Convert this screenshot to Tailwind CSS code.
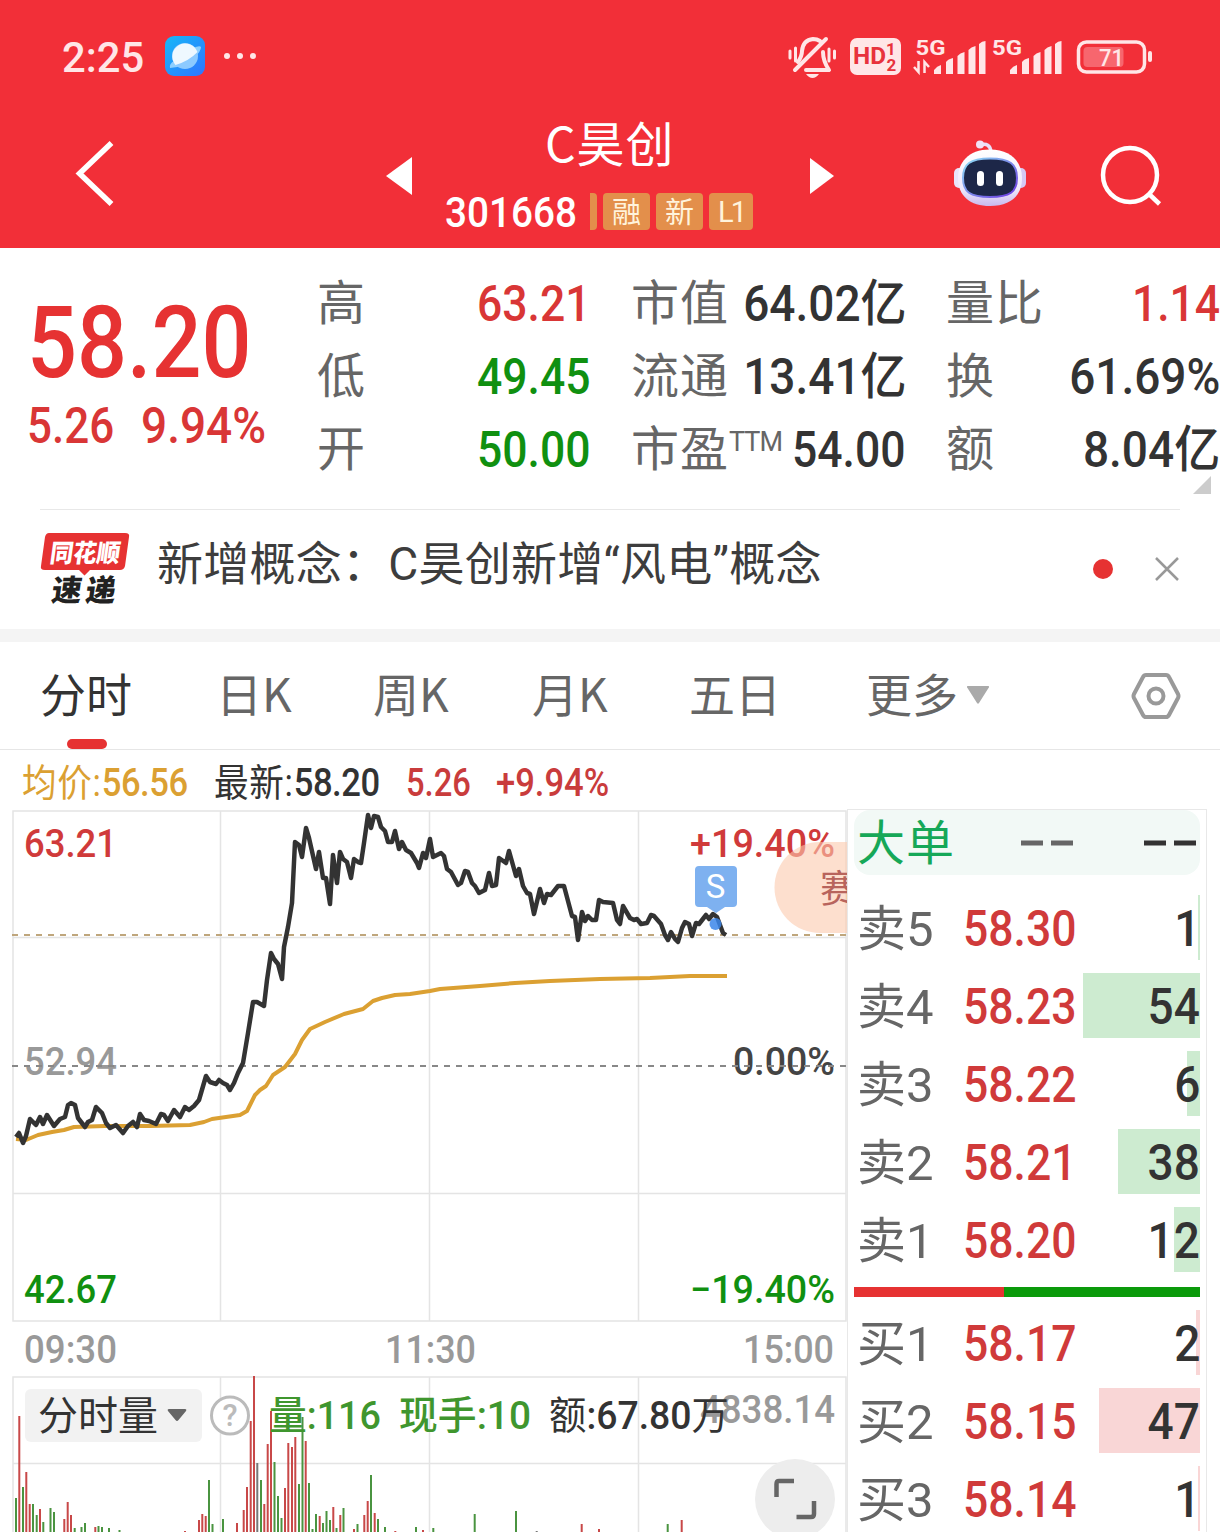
<!DOCTYPE html>
<html lang="zh-CN">
  <head>
    <meta charset="UTF-8" />
    <meta name="viewport" content="width=device-width, initial-scale=1.0" />
    <title>C昊创 301668</title>
    <script src="https://cdn.jsdelivr.net/npm/@tailwindcss/browser@4"></script>
  </head>
  <body class="bg-white">
    <div class="w-[1220px] h-[1532px] overflow-hidden flex flex-col bg-white text-[#333] leading-none whitespace-nowrap font-[Roboto,'Noto_Sans_CJK_SC',sans-serif]">

      <!-- Header -->
      <header class="h-[248px] shrink-0 bg-[#f22f38] text-white">
        <div class="h-[112px] flex items-center pl-[62px] text-[#ffe6e7]">
          <span class="w-[103px] text-[43px] font-medium mt-[3px] origin-left scale-x-[.97]">2:25</span>
          <svg class="w-10 h-10" viewBox="0 0 40 40">
            <defs>
              <linearGradient id="app" x1="0" y1="0" x2="1" y2="1">
                <stop offset="0" stop-color="#17b8f8" />
                <stop offset="1" stop-color="#2f74ff" />
              </linearGradient>
            </defs>
            <rect width="40" height="40" rx="9" fill="url(#app)" />
            <path d="M5 32Q4 28 9 25L28 12Q35 9 36 11Q36 15 30 21Q18 32 5 32Z" fill="#8fd0ff" />
            <circle cx="20" cy="20" r="13" fill="#8ccaff" />
            <path d="M10.500 29A13 13 0 1 1 32.500 16Q24 25 10.500 29Z" fill="#eef8ff" />
          </svg>
          <svg class="ml-[18px] w-[36px] h-[8px]" viewBox="0 0 36 8" fill="currentColor">
            <circle cx="4" cy="4" r="3" /><circle cx="17" cy="4" r="3" /><circle cx="30" cy="4" r="3" />
          </svg>
          <svg class="ml-[525px] w-[376px] h-[50px]" viewBox="784 31 376 50" fill="currentColor">
            <!-- muted bell -->
            <g fill="none" stroke="currentColor" stroke-width="4" stroke-linecap="round" stroke-linejoin="round">
              <path d="M798 62Q802 56 802 51Q803 40 813 39Q817 39 820 41" />
              <path d="M795 70L826 39" />
              <path d="M823 52Q823 61 829 70H806" />
              <path d="M790 51V58M795.500 48V61M829 49V61M834.500 51V58" stroke-width="3" />
            </g>
            <path d="M806 74H819Q816 78 812.500 78Q809 78 806 74Z" />
            <!-- HD badge -->
            <rect x="850" y="38" width="51" height="37" rx="7" />
            <g fill="#e8323c" class="font-bold">
              <text x="853" y="64" font-size="23" textLength="33" lengthAdjust="spacingAndGlyphs">HD</text>
              <text x="886" y="55" font-size="17">1</text>
              <text x="886.500" y="71" font-size="17">2</text>
            </g>
            <!-- signal -->
            <text x="915.500" y="55" font-size="21" class="font-bold" textLength="30" lengthAdjust="spacingAndGlyphs">5G</text>
            <text x="992" y="55" font-size="21" class="font-bold" textLength="30" lengthAdjust="spacingAndGlyphs">5G</text>
            <path d="M914 67L918.500 72V61M924.500 73V62L929 67" fill="none" stroke="currentColor" stroke-width="2.500" />
            <path d="M934 74V70Q937 66 941 65V74ZM946 74V62Q948 59 953 58V74ZM957.500 74V56Q960 53 964.500 52V74ZM968.500 74V50Q971 47 975.500 46V74ZM979 74V44Q982 41 985.500 41V74Z" />
            <path d="M1010 74V70Q1013 66 1017 65V74ZM1022 74V62Q1024 59 1029 58V74ZM1033.500 74V56Q1036 53 1040.500 52V74ZM1044.500 74V50Q1047 47 1051.500 46V74ZM1055 74V44Q1058 41 1061.500 41V74Z" />
            <!-- battery -->
            <rect x="1078.500" y="42" width="66" height="30" rx="8" fill="none" stroke="currentColor" stroke-width="3.500" />
            <rect x="1083.500" y="47" width="40" height="20" rx="4" fill="#f7666e" />
            <rect x="1148" y="51" width="4" height="11" rx="2" />
            <text x="1099" y="65.500" font-size="24" class="font-medium" textLength="25" lengthAdjust="spacingAndGlyphs">71</text>
          </svg>
        </div>

        <div class="h-[136px] flex">
          <svg class="ml-[72px] mt-[26px] w-[44px] h-[70px]" viewBox="72 138 44 70" fill="none" stroke="white" stroke-width="5.500">
            <path d="M111.500 143L79.500 173.500L111.500 204" />
          </svg>
          <svg class="ml-[270px] mt-[45px] w-[26px] h-[38px]" viewBox="0 0 26 38" fill="white"><path d="M0 19L26 0V38Z" /></svg>
          <div class="ml-[33px] w-[308px] flex flex-col">
            <h1 class="h-[60px] pl-[100px] text-[48px] tracking-[1px] font-['Noto_Sans_CJK_SC',sans-serif] mt-[5px]">C昊创</h1>
            <div class="flex h-[37px] items-center mt-[16px]">
              <span class="w-[145px]"><span class="inline-block origin-left scale-x-[.9] text-[43px] font-medium mt-[2px]">301668</span></span>
              <span class="w-[7px] h-[37px] rounded-r bg-[#e38f4b]"></span>
              <div class="flex gap-[6px] ml-[6px] text-[29px] text-[#fff3dc]">
                <span class="w-[47px] h-[37px] rounded bg-[#e38f4b] text-center leading-[40px]">融</span>
                <span class="w-[47px] h-[37px] rounded bg-[#e38f4b] text-center leading-[40px]">新</span>
                <span class="w-[44px] h-[37px] rounded bg-[#e38f4b] text-center leading-[38px] tracking-[-3px]">L1</span>
              </div>
            </div>
          </div>
          <svg class="ml-[57px] mt-[46px] w-[24px] h-[36px]" viewBox="0 0 24 36" fill="white"><path d="M0 0L24 18L0 36Z" /></svg>
          <svg class="ml-[118px] mt-[26px] w-[76px] h-[72px]" viewBox="952 138 76 72">
            <defs>
              <linearGradient id="shell" x1="0" y1="0" x2="0" y2="1">
                <stop offset="0" stop-color="#fff" />
                <stop offset=".7" stop-color="#efe9fb" />
                <stop offset="1" stop-color="#c9b9ee" />
              </linearGradient>
              <linearGradient id="rim" x1="0" y1="0" x2="1" y2="1">
                <stop offset="0" stop-color="#8fe0f5" />
                <stop offset="1" stop-color="#6a35e0" />
              </linearGradient>
            </defs>
            <path d="M980 145Q990 142 991 152" fill="none" stroke="#eadff8" stroke-width="3.500" />
            <circle cx="980" cy="144.500" r="4" fill="#f1e2f6" />
            <rect x="954" y="168" width="10" height="20" rx="5" fill="#e9e4fa" />
            <rect x="1016" y="168" width="10" height="20" rx="5" fill="#d5c9f4" />
            <path d="M990 149.500C1012 149.500 1022 163 1022 178C1022 196 1010 206 990 206C970 206 958 196 958 178C958 163 968 149.500 990 149.500Z" fill="url(#shell)" />
            <path d="M990 158.500C1010 158.500 1017 164 1017 178C1017 192 1010 197 990 197C970 197 963 192 963 178C963 164 970 158.500 990 158.500Z" fill="#1d2748" stroke="url(#rim)" stroke-width="2" />
            <rect x="977" y="171" width="7" height="15" rx="3.500" fill="white" />
            <rect x="996" y="171" width="7" height="15" rx="3.500" fill="white" />
          </svg>
          <svg class="ml-[70px] mt-[30px] w-[66px] h-[66px]" viewBox="1098 142 66 66" fill="none" stroke="white" stroke-width="4.500">
            <circle cx="1130" cy="175" r="27" />
            <path d="M1149 194L1159.500 204" />
          </svg>
        </div>
      </header>

      <!-- Quote -->
      <section class="h-[261px] shrink-0 flex relative">
        <div class="w-[317px] pl-[27px] text-[#e63232] font-medium">
          <div class="text-[100px] mt-[45px] origin-left scale-x-[.88]">58.20</div>
          <div class="flex text-[50px] mt-[8px] text-[#d93636]">
            <span class="w-[114px] origin-left scale-x-[.88]">5.26</span>
            <span class="origin-left scale-x-[.92]">9.94%</span>
          </div>
        </div>
        <div class="w-[274px] pt-[19px] flex flex-col text-[48px] text-[#666]">
          <div class="h-[73px] flex items-center justify-between"><span>高</span><b class="mt-px text-[50px] font-medium origin-right scale-x-[.89] text-[#d93636]">63.21</b></div>
          <div class="h-[73px] flex items-center justify-between"><span>低</span><b class="mt-px text-[50px] font-medium origin-right scale-x-[.89] text-[#109010]">49.45</b></div>
          <div class="h-[73px] flex items-center justify-between"><span>开</span><b class="mt-px text-[50px] font-medium origin-right scale-x-[.89] text-[#109010]">50.00</b></div>
        </div>
        <div class="ml-[40px] w-[275px] pt-[19px] flex flex-col text-[48px] text-[#666]">
          <div class="h-[73px] flex items-center justify-between"><span class="tracking-[1px]">市值</span><b class="mt-px text-[50px] font-medium origin-right scale-x-[.92] text-[#333]">64.02亿</b></div>
          <div class="h-[73px] flex items-center justify-between"><span class="tracking-[1px]">流通</span><b class="mt-px text-[50px] font-medium origin-right scale-x-[.92] text-[#333]">13.41亿</b></div>
          <div class="h-[73px] flex items-center justify-between"><span class="flex tracking-[1px]">市盈<small class="mt-[3px] text-[27px] tracking-[-1px]">TTM</small></span><b class="mt-px -ml-[12px] text-[50px] font-medium origin-right scale-x-[.89] text-[#333]">54.00</b></div>
        </div>
        <div class="ml-[40px] w-[274px] pt-[19px] flex flex-col text-[48px] text-[#666]">
          <div class="h-[73px] flex items-center justify-between"><span class="tracking-[1px]">量比</span><b class="mt-px text-[50px] font-medium origin-right scale-x-[.89] text-[#d93636]">1.14</b></div>
          <div class="h-[73px] flex items-center justify-between"><span>换</span><b class="mt-px text-[50px] font-medium origin-right scale-x-[.92] text-[#333]">61.69%</b></div>
          <div class="h-[73px] flex items-center justify-between"><span>额</span><b class="mt-px text-[50px] font-medium origin-right scale-x-[.92] text-[#333]">8.04亿</b></div>
        </div>
        <svg class="absolute right-[9px] bottom-[15px] w-[18px] h-[18px]" viewBox="0 0 18 18" fill="#ccc"><path d="M18 0V18H0Z" /></svg>
      </section>

      <!-- News strip -->
      <section class="h-[120px] shrink-0 mx-[40px] border-t border-[#e8e8e8] flex">
        <svg class="mt-[20px] w-[92px] h-[78px]" viewBox="40 530 92 78">
          <path d="M49 533H125Q130 533 129 537L125 566Q124 570 120 570H90L84.500 575.500L79 570H45Q40 570 41 566L45 537Q46 533 49 533Z" fill="#e63232" />
          <g class="font-black" transform="skewX(-8)">
            <text x="128" y="562" font-size="25" fill="white" textLength="70" lengthAdjust="spacingAndGlyphs">同花顺</text>
            <text x="135" y="601" font-size="30" fill="#222" textLength="64">速递</text>
          </g>
        </svg>
        <span class="ml-[25px] w-[936px] text-[46px] tracking-[.25px] mt-[31px] text-[#3d3d3d]">新增概念：C昊创新增“风电”概念</span>
        <span class="mt-[49px] w-5 h-5 rounded-full bg-[#e63232]"></span>
        <svg class="ml-[42px] mt-[47px] w-6 h-6" viewBox="0 0 24 24" stroke="#999" stroke-width="2.500"><path d="M1 1L23 23M23 1L1 23" /></svg>
      </section>
      <div class="h-[13px] shrink-0 bg-[#f4f4f4]"></div>

      <!-- Tabs -->
      <nav class="h-[108px] shrink-0 border-b border-[#e6e6e6] pl-[40px] flex text-[46px] text-[#666] font-['Noto_Sans_CJK_SC',sans-serif]">
        <div class="w-[176px] flex flex-col">
          <span class="mt-[27px] h-[70px] text-[#333]">分时</span>
          <span class="ml-[27px] w-[40px] h-[10px] rounded-full bg-[#e63232]"></span>
        </div>
        <span class="w-[157px] mt-[27px]">日K</span>
        <span class="w-[159px] mt-[27px]">周K</span>
        <span class="w-[157px] mt-[27px]">月K</span>
        <span class="w-[177px] mt-[27px]">五日</span>
        <span class="w-[101px] mt-[27px]">更多</span>
        <svg class="mt-[44px] w-[22px] h-[18px]" viewBox="0 0 22 18" fill="#aaa"><path d="M1 0H21Q23 0 21.500 2L12 17Q11 18.500 10 17L.5 2Q-1 0 1 0Z" /></svg>
        <svg class="ml-[142px] mt-[30px] w-[50px] h-[48px]" viewBox="0 0 50 48" fill="none" stroke="#999" stroke-width="4" stroke-linejoin="round">
          <path d="M15 3H35Q37 3 38 5L47 22Q48 24 47 26L38 43Q37 45 35 45H15Q13 45 12 43L3 26Q2 24 3 22L12 5Q13 3 15 3Z" />
          <circle cx="25" cy="24" r="7.500" />
        </svg>
      </nav>

      <div class="flex grow">
        <!-- Intraday chart -->
        <section class="w-[847px] shrink-0">
          <div class="h-[60px] flex pl-[22px] pt-[14px] text-[38px] font-medium">
            <span class="w-[192px] origin-left scale-x-[.91] text-[#dba032]"><span class="font-normal tracking-[.8px]">均价:</span><span class="tracking-[-.5px]">56.56</span></span>
            <span class="w-[192px] origin-left scale-x-[.91]"><span class="font-normal tracking-[.8px]">最新:</span><span class="tracking-[-.5px]">58.20</span></span>
            <span class="w-[90px] origin-left scale-x-[.86] text-[#c93c3c]">5.26</span>
            <span class="origin-left scale-x-[.91] text-[#c93c3c]">+9.94%</span>
          </div>
          <svg class="block w-[847px] h-[722px]" viewBox="0 810 847 722" font-size="39" font-weight="500">
            <!-- grid -->
            <g fill="none" stroke="#e4e4e4" stroke-width="1.500">
              <path d="M13 811H846V1321H13ZM220.500 811V1321M429.500 811V1321M638.500 811V1321M13 937.500H846M13 1193.500H846" />
              <path d="M13 1532V1377H846V1532M220.500 1377V1532M429.500 1377V1532M638.500 1377V1532M13 1463.500H846" />
            </g>
            <path d="M12 935H846" stroke="#bfa67c" stroke-width="2" stroke-dasharray="6 6" />

            <!-- axis labels -->
            <text x="24" y="857" fill="#d03a3a" textLength="93" lengthAdjust="spacingAndGlyphs">63.21</text>
            <text x="24" y="1075" fill="#999" textLength="93" lengthAdjust="spacingAndGlyphs">52.94</text>
            <text x="24" y="1303" fill="#109010" textLength="93" lengthAdjust="spacingAndGlyphs">42.67</text>
            <text x="690" y="857" fill="#d03a3a" textLength="145" lengthAdjust="spacingAndGlyphs">+19.40%</text>
            <text x="733" y="1075" fill="#444" textLength="102" lengthAdjust="spacingAndGlyphs">0.00%</text>
            <text x="690" y="1303" fill="#109010" textLength="145" lengthAdjust="spacingAndGlyphs">−19.40%</text>
            <path d="M12 1066H846" stroke="#888" stroke-width="2" stroke-dasharray="6 6" />
            <g fill="#999">
              <text x="24" y="1363" textLength="93" lengthAdjust="spacingAndGlyphs">09:30</text>
              <text x="385" y="1363" textLength="91" lengthAdjust="spacingAndGlyphs">11:30</text>
              <text x="743" y="1363" textLength="91" lengthAdjust="spacingAndGlyphs">15:00</text>
              <text x="700" y="1423" textLength="135" lengthAdjust="spacingAndGlyphs">4838.14</text>
            </g>

            <!-- average and price lines -->
            <g fill="none" stroke-linejoin="round">
              <path stroke="#dba032" stroke-width="4" d="M16 1139L26 1140 38 1135 52 1132 64 1130 74 1127 105 1126 150 1126 190 1125 204 1122 212 1119 240 1115 247 1111 251 1103 255 1095 260 1090 266 1086 273 1075 285 1067 295 1054 302 1040 310 1029 325 1022 344 1014 363 1009 368 1005 373 1001 382 998 395 995 410 994 430 991 440 989 480 986 515 983 550 981 600 979 650 978 690 976 727 976" />
              <path stroke="#333" stroke-width="4.500" d="M16 1137L19 1133 23 1143 26 1136 30 1119 36 1125 40 1117 43 1124 47 1115 54 1126 60 1119 65 1117 68 1105 71 1103 75 1105 78 1118 85 1127 88 1122 92 1120 96 1107 102 1113 106 1123 110 1128 116 1125 123 1133 128 1126 133 1122 137 1127 140 1114 144 1120 149 1121 156 1124 161 1114 164 1115 168 1121 174 1110 180 1117 185 1107 189 1110 194 1106 199 1100 206 1076 210 1082 216 1084 219 1080 223 1083 227 1085 230 1090 234 1083 238 1073 243 1063 248 1033 253 1002 257 1002 264 1006 267 980 271 953 274 959 278 964 282 979 284 947 288 927 292 903 295 842 299 845 302 857 306 828 309 838 316 869 319 852 323 878 326 878 330 904 333 855 337 883 340 852 343 859 347 862 351 878 354 859 358 862 361 863 364 843 368 815 371 828 374 816 378 817 381 827 385 831 388 842 392 842 395 831 399 849 402 842 406 850 411 853 417 863 419 868 423 853 426 858 430 839 433 857 441 853 444 856 447 869 451 872 458 885 461 883 465 871 468 872 472 883 475 886 479 893 485 890 489 873 492 886 496 885 499 858 506 863 509 851 516 876 519 869 523 886 527 893 530 894 534 914 540 889 544 903 547 894 551 895 558 886 564 886 572 916 575 917 578 940 582 912 585 921 588 916 592 920 596 920 599 900 603 902 613 903 617 920 620 924 623 906 630 918 634 920 637 919 641 924 647 923 651 915 654 916 661 924 665 935 668 940 671 932 675 939 678 942 682 928 685 922 689 924 692 936 696 923 699 924 706 915 709 919 713 914 717 917 720 925 723 933 726 935" />
            </g>

            <!-- sell marker -->
            <path d="M699 866H733Q737 866 737 870V903Q737 907 733 907H725L716 913L707 907H699Q695 907 695 903V870Q695 866 699 866Z" fill="#7eb1f0" />
            <text x="715.500" y="898" font-size="33" font-weight="400" fill="white" text-anchor="middle">S</text>
            <circle cx="715.500" cy="924" r="6" fill="#3b86ea" fill-opacity=".85" />

            <!-- promo bubble -->
            <path d="M847 842H820A45.500 45.500 0 0 0 820 933H847Z" fill="#fcc9ad" fill-opacity=".6" />
            <text x="820" y="902" font-size="38" font-weight="400" fill="#b8645c">赛</text>

            <!-- volume -->
            <g fill="none" stroke-width="2">
              <path stroke="#4a9440" d="M16 1498V1532M23 1487V1532M33 1504V1532M36.700 1515V1532M43.300 1522V1532M50.500 1508V1532M54 1512V1532M74.700 1528V1532M81.500 1527V1532M85 1523V1532M98.500 1526V1532M102 1527V1532M109 1528V1532M119.500 1530V1532M209 1480V1532M212.500 1524V1532M223 1519V1532M261 1480V1532M274.500 1462V1532M278 1496V1532M281.500 1518V1532M299 1484V1532M302.500 1417V1532M309 1483V1532M312.500 1529V1532M316 1514V1532M323 1523V1532M326.500 1511V1532M330 1520V1532M336.500 1528V1532M343.500 1508V1532M357.500 1524V1532M371 1475V1532M378 1519V1532M385 1527V1532M416 1527V1532M433.300 1528V1532M474.700 1514V1532M516 1511V1532M667.700 1524V1532" />
              <path stroke="#c84848" d="M19.300 1416V1532M26.300 1472V1532M29.700 1504V1532M40 1509V1532M64.300 1519V1532M67.700 1502V1532M71 1515V1532M95.300 1527V1532M185 1531V1532M199 1520V1532M202.300 1514V1532M205.700 1516V1532M237 1523V1532M243.700 1510V1532M247 1487V1532M250.700 1421V1532M254 1376V1532M264.300 1504V1532M267.700 1444V1532M271 1411V1532M285 1488V1532M288.300 1443V1532M292 1447V1532M295.300 1437V1532M305.700 1441V1532M319.700 1516V1532M333.300 1507V1532M340.300 1515V1532M354 1529V1532M364.300 1515V1532M367.700 1501V1532M374.700 1513V1532M395.300 1531V1532M423 1530V1532M581.700 1524V1532M599 1529V1532M681.700 1520V1532" />
              <path stroke="#777" d="M257.300 1463V1532M536.700 1531V1532" />
            </g>
            <rect x="25" y="1389" width="177" height="53" rx="6" fill="#f2f2f2" />
            <text x="38" y="1430" font-size="40" font-weight="400" fill="#333">分时量</text>
            <path d="M169 1409H185Q187 1409 186 1411L178.500 1420Q177 1422 175.500 1420L168 1411Q167 1409 169 1409Z" fill="#666" />
            <circle cx="230" cy="1415.500" r="18.500" fill="white" stroke="#bbb" stroke-width="3" />
            <text x="230" y="1426" font-size="31" font-weight="500" fill="#bbb" text-anchor="middle">?</text>
            <g>
              <text x="269" y="1429" fill="#3f962e" textLength="112" lengthAdjust="spacingAndGlyphs">量:116</text>
              <text x="399" y="1429" fill="#3f962e" textLength="132" lengthAdjust="spacingAndGlyphs">现手:10</text>
              <text x="549" y="1429" fill="#333" textLength="180" lengthAdjust="spacingAndGlyphs"><tspan font-weight="400">额</tspan>:67.80<tspan font-weight="400">万</tspan></text>
            </g>
            <circle cx="795" cy="1499" r="40" fill="#ededed" />
            <path d="M776.500 1497V1484Q776.500 1481 779 1481H794M814 1501V1514Q814 1517 811 1517H796.500" fill="none" stroke="#666" stroke-width="4.500" />
          </svg>
        </section>

        <!-- Order book -->
        <section class="relative mt-[59px] w-[360px] shrink-0 border border-[#e8e8e8] px-[6px] text-[48px] text-[#666]">
          <div class="h-[65px] rounded-2xl bg-[#f2f9f6] flex items-center justify-between pl-[3px] pr-[3px]">
            <span class="tracking-[1px] text-[#16a858] mt-[3px]">大单</span>
            <svg class="w-[177px] h-[6px]" viewBox="0 0 177 6" stroke-width="5">
              <path d="M1 3H23M31 3H53" stroke="#666" />
              <path d="M124 3H146M154 3H176" stroke="#333" />
            </svg>
          </div>
          <div class="mt-[15px] text-[50px] font-medium">
            <div class="relative h-[78px] flex items-center pl-[3px]">
              <span class="w-[106px] font-normal text-[49px]">卖5</span><span class="grow origin-left scale-x-[.89] text-[#d03a3a]">58.30</span>
              <i class="absolute right-0 top-[5px] w-[2px] h-[65px] bg-[#cdebd0]"></i><span class="relative origin-right scale-x-[.92] text-[#333]">1</span>
            </div>
            <div class="relative h-[78px] flex items-center pl-[3px]">
              <span class="w-[106px] font-normal text-[49px]">卖4</span><span class="grow origin-left scale-x-[.89] text-[#d03a3a]">58.23</span>
              <i class="absolute right-0 top-[5px] w-[117px] h-[65px] bg-[#cdebd0]"></i><span class="relative origin-right scale-x-[.92] text-[#333]">54</span>
            </div>
            <div class="relative h-[78px] flex items-center pl-[3px]">
              <span class="w-[106px] font-normal text-[49px]">卖3</span><span class="grow origin-left scale-x-[.89] text-[#d03a3a]">58.22</span>
              <i class="absolute right-0 top-[5px] w-[13px] h-[65px] bg-[#cdebd0]"></i><span class="relative origin-right scale-x-[.92] text-[#333]">6</span>
            </div>
            <div class="relative h-[78px] flex items-center pl-[3px]">
              <span class="w-[106px] font-normal text-[49px]">卖2</span><span class="grow origin-left scale-x-[.89] text-[#d03a3a]">58.21</span>
              <i class="absolute right-0 top-[5px] w-[82px] h-[65px] bg-[#cdebd0]"></i><span class="relative origin-right scale-x-[.92] text-[#333]">38</span>
            </div>
            <div class="relative h-[78px] flex items-center pl-[3px]">
              <span class="w-[106px] font-normal text-[49px]">卖1</span><span class="grow origin-left scale-x-[.89] text-[#d03a3a]">58.20</span>
              <i class="absolute right-0 top-[5px] w-[26px] h-[65px] bg-[#cdebd0]"></i><span class="relative origin-right scale-x-[.92] text-[#333]">12</span>
            </div>
            <div class="h-[25px] pt-[7px] flex">
              <i class="w-[150px] h-[10px] bg-[#e63232]"></i><i class="grow h-[10px] bg-[#0a9a0a]"></i>
            </div>
            <div class="relative h-[78px] flex items-center pl-[3px]">
              <span class="w-[106px] font-normal text-[49px]">买1</span><span class="grow origin-left scale-x-[.89] text-[#d03a3a]">58.17</span>
              <i class="absolute right-0 top-[5px] w-[4px] h-[65px] bg-[#f9d6d6]"></i><span class="relative origin-right scale-x-[.92] text-[#333]">2</span>
            </div>
            <div class="relative h-[78px] flex items-center pl-[3px]">
              <span class="w-[106px] font-normal text-[49px]">买2</span><span class="grow origin-left scale-x-[.89] text-[#d03a3a]">58.15</span>
              <i class="absolute right-0 top-[5px] w-[101px] h-[65px] bg-[#f9d6d6]"></i><span class="relative origin-right scale-x-[.92] text-[#333]">47</span>
            </div>
            <div class="relative h-[78px] flex items-center pl-[3px]">
              <span class="w-[106px] font-normal text-[49px]">买3</span><span class="grow origin-left scale-x-[.89] text-[#d03a3a]">58.14</span>
              <i class="absolute right-0 top-[5px] w-[2px] h-[65px] bg-[#f9d6d6]"></i><span class="relative origin-right scale-x-[.92] text-[#333]">1</span>
            </div>
          </div>
        </section>
      </div>
    </div>
  </body>
</html>
